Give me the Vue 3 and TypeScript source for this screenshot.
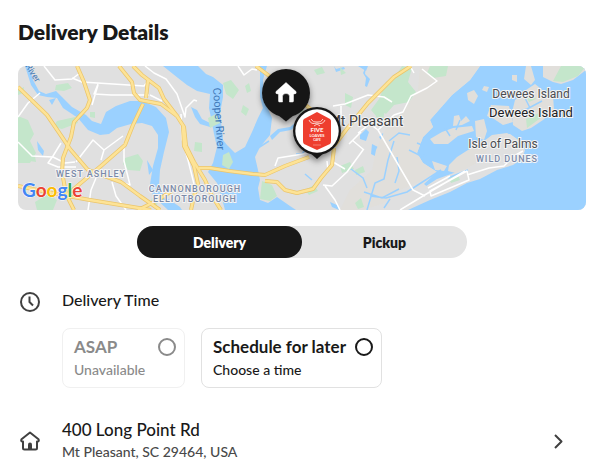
<script setup lang="ts">
import { ref } from 'vue'

type Mode = 'Delivery' | 'Pickup'

interface TimeOption {
  id: string
  title: string
  note: string
  disabled: boolean
}

const modes: Mode[] = ['Delivery', 'Pickup']
const mode = ref<Mode>('Delivery')
const time = ref<string>('')

const options: TimeOption[] = [
  { id: 'asap', title: 'ASAP', note: 'Unavailable', disabled: true },
  { id: 'later', title: 'Schedule for later', note: 'Choose a time', disabled: false },
]

const water: string[] = [
  // Cooper and Wando rivers, harbor
  'M163 66L198 66 206 74 213 77 223 85 223 97 220 113 222 130 223 140 227 145 235 153 245 147 252 132 258 118 263 108 260 97 260 66 267 66 263 80 264 100 272 118 270 135 260 147 255 157 258 170 260 180 258 188 260 200 268 203 277 197 290 206 296 210 225 210 221 195 217 183 208 172 213 163 217 147 214 134 212 123 209 108 210 94 197 91 187 85 178 78Z',
  // Ashley river
  'M25 66L29 66 33 80 39 91 46 94 56 91 62 97 72 107 86 115 92 121 101 124 106 112 116 106 130 101 142 101 156 107 166 118 169 132 164 152 160 170 159 186 164 196 180 207 182 210 168 210 153 196 150 184 153 166 158 148 158 135 152 126 142 123 131 124 117 128 109 134 100 135 88 130 78 118 63 108 57 98 47 97 38 95 31 85Z',
  'M49 100L56 98 52 105ZM37 141L44 151 43 156 38 150Z',
  'M191 107L197 110 202 119 210 123 210 127 200 124 195 117ZM147 160L153 170 149 175Z',
  // sea and back bays
  'M480 66L470 80 452 95 430 120 433 127 423 137 417 153 423 163 437 172 424 184 430 189 423 196 390 210 586 210 586 66Z',
  'M270 136l8-7 12-2 6-5 2 2-7 6-11 2-8 8ZM366 66l-1 8 5 5-3 8-2-1 1-8-3-5ZM334 66l2 3 8-2 1 2-9 3ZM306 148l5-4 4 2-6 4Z',
  'M360 135l6-6 3 3-3 9-6-2ZM372 144l8 4-5 8-4-2ZM349 197l10-3 1 8-6 3ZM330 202l7 3 2 5-7-3ZM358 66l10 0-2 5ZM379 137l4-4 3 5-5 2Z',
]

const marsh: string[] = [
  'M420 66L480 66 470 80 452 95 430 120 433 127 423 137 417 153 423 163 437 172 421 181 400 190 382 204 362 210 340 210 350 190 372 170 376 150 385 130 405 108 418 90Z',
  'M430 139L442 132 453 128 472 126 474 131 458 136 448 144 434 144ZM454 116l5-1 2 6 5-5 4 5-8 4-9 1ZM467 93l7-3 4 6-4 8-6-4ZM475 121l9-2 3 12-3 9-8-3ZM484 86l5 1-2 5-5-2ZM491 105l18 1 4 16-10 3-9-6-7-3Z',
  'M512 112L515 100 526 90 535 84 545 92 553 95 554 110 543 120 531 128 522 131 513 125ZM526 66l5 0 4 14-4 5-7-6ZM512 75l5 0 0 7-5-2Z',
  'M543 66L586 66 586 70 573 80 561 84 553 82 543 77ZM449 165L457 157 468 150 480 144 492 135 507 133 514 137 505 151 490 165 472 172 459 174 448 171ZM432 161l15 5-3 5-9-1Z',
]

const barrierIsland =
  'M370 210L388 202 423 188 437 179 465 169 481 161 487 150 489 139 499 134 510 134 520 141 525 150 522 159 513 165 497 170 480 179 467 183 450 192 430 200 408 210Z'

const parks: string[] = [
  'M18 116l10 4 6 14-4 7 6 12-6 10-12 0ZM56 85l12-2 4 5-8 3-9-1ZM57 121l18-4 3 6-16 6-9-2ZM125 158l13-4 5 7-3 10-12-1-5-6ZM35 202l13-8 9 6-4 10-16 0ZM28 154l7 2 1 6-6-1Z',
  'M223 83l8-3 8 10-6 9-7-5ZM208 118l8-4 4 9-10 5ZM195 142l7 1 0 9-8-1ZM223 155l6-3 4 10-4 7-7-4ZM245 86l4-3 2 8-4 2ZM243 105l6 4-3 7-5-4Z',
  'M262 181l10 4 5 11-7 5-10-2ZM291 108l9-4 4 7-9 4ZM304 136l7 3-2 6-7-3ZM305 190l9-5 4 6-9 4ZM314 70l8-3 3 6-8 2ZM355 170l8-4 2 6-9 3ZM345 93l8 4-2 11-6-3Z',
  'M386 82l9-5 7-11 10 2-4 14 8 10-7 10-15 3-8 9-7-5-3 7-5-6 8-11ZM430 66l18 0-2 10-13 2-6-5ZM340 166l10-4 4 7-12 4ZM377 106l8 3-2 12-7-4ZM355 203l6-5 3 9-6 2ZM340 67l6 6-5 2Z',
  'M561 66L586 66 578 76 563 82 553 81ZM526 119l13-6 3 4-15 11ZM449 178l9-3 2 5-9 3ZM527 98l6-4 3 5-7 3ZM18 90l6-3-1 6-5 2ZM90 112l5 0 0 6-5-1ZM152 198l7 3-3 5-6-3Z',
]

const creeks: string[] = [
  'M367 210l8-27 9-4 4-19 6-19M370 196l16 2 21-6 34-22M364 192l18 6 17-9M384 208l6-9M389 141l10-8 11 2M397 157l2 14-4 12M409 150l10 5 9 1M351 169l12 9 4 10M308 146l-6 8-6 0M255 150l14-9M305 174l7 6M333 131l7 0M417 143l5 2M460 120l-4 10M445 128l5 8M448 178l20-8M505 116l22-7 15-8M523 94l7 14',
]

const minorRoads: string[] = [
  'M44 66l11 14 17-1 8-6M72 78l10 4 62 4 5-6M98 84l-4 10 17 1 38 0M92 105l6-20M18 117l10-14 12-10M18 142l14 14 21 1 12 6 10-1M53 156l8-13M53 156l-5 7 10 4 18 0M76 162l17-22 11 10 19-14M104 150l-3 10M124 143l0 18 6 24-14-4M88 210l3-20 5-12M112 182l4 14 10 14',
  'M145 66l9 7 12 6 11 15 8 23 1-9 8-8 3 1M181 114l1 25 6 21 6 24M238 66l6 9 8-6 5 1M150 95l12 6',
  'M333 106l12-2 23-9 16 2 8 5M341 106l0 16M275 166l3-8 31-5M358 133l12-9 8 6 35 60 12 6M378 130l16-15 9-3 8-16 16-8 10-7-15-12M363 150l-16 22-15 14-9-1M352 140l12 10M333 162l12 7M361 132l-12 12M325 186l10 14 5 10M410 66l4 7M328 170l-1-9',
  'M400 210l23-14 42-25M428 188l22-12M430 191l37-20 2 9-38 16ZM467 175l22-7 15-2 10-10 9-5',
]

const majorRoads: string[] = [
  'M18 87L47 115 62 137 70 149 88 170 121 182 140 196 160 210',
  'M77 66L84 82 90 100 87 108 74 122 71 137 63 158 62 172 66 194 74 210',
  'M119 66L132 82 134 93 140 100 161 104 177 116 184 127 186 146 194 162 205 180 212 196 221 210',
  'M133 66L142 75 159 88 164 99 177 116M148 80l-2 18M143 104l-10 21-8 20-24 21-38 32',
  'M18 186L62 195 90 200 151 210',
  'M183 126l1 20 10 20 4 18-4 12-3 14M199 168l11 0 19 3 24 3 12 1 20-9 24-9',
  'M265 181l12 1 8 8 12 3 16-4 8-11 11-13 2-17M138 210l20-10 18-12 18-1',
  'M256 66l12 9 40 32 16 15M334 146l12-16 22-27 26-26 17-11',
]
</script>

<template>
  <main class="page">
    <h1>Delivery Details</h1>

    <svg class="map" viewBox="18 66 568 144" preserveAspectRatio="xMidYMid slice" role="img" aria-label="Map">
      <defs>
        <filter id="pin-shadow" x="-50%" y="-50%" width="200%" height="200%">
          <feDropShadow dx="0" dy="3" stdDeviation="3" flood-color="#000" flood-opacity="0.45" />
        </filter>
      </defs>
      <rect x="18" y="66" width="568" height="144" class="land" />
      <path v-for="d in water" :key="d" :d="d" class="water" />
      <path v-for="d in marsh" :key="d" :d="d" class="marsh" />
      <path :d="barrierIsland" class="land" />
      <path v-for="d in parks" :key="d" :d="d" class="park" />
      <path v-for="d in creeks" :key="d" :d="d" class="creek" />
      <path v-for="d in minorRoads" :key="d" :d="d" class="minor" />
      <path v-for="d in majorRoads" :key="'c' + d" :d="d" class="casing" />
      <path v-for="d in majorRoads" :key="d" :d="d" class="major" />

      <g class="river">
        <text transform="translate(213 88) rotate(86)">Cooper River</text>
        <text transform="translate(25 66) rotate(58)" class="small">River</text>
      </g>
      <g class="district">
        <text x="91" y="177">WEST ASHLEY</text>
        <text x="195" y="192">CANNONBOROUGH</text>
        <text x="195" y="202">ELLIOTBOROUGH</text>
        <text x="507" y="162">WILD DUNES</text>
      </g>
      <g class="place">
        <text x="531" y="98">Dewees Island</text>
        <text x="531" y="117" class="strong">Dewees Island</text>
        <text x="503" y="148">Isle of Palms</text>
        <text x="366" y="126" class="town">Mt Pleasant</text>
      </g>
      <text x="22" y="197" class="google"><tspan fill="#4285f4">G</tspan><tspan fill="#ea4335">o</tspan><tspan fill="#fbbc05">o</tspan><tspan fill="#4285f4">g</tspan><tspan fill="#34a853">l</tspan><tspan fill="#ea4335">e</tspan></text>

      <g filter="url(#pin-shadow)">
        <path d="M278 115L286 121.500 294 115Z" fill="#191919" />
        <circle cx="286" cy="93" r="24" fill="#191919" />
      </g>
      <path
        d="M286 82.500L296 91.500Q297 94 294 94H293.500V101Q293.500 102 292.500 102H289.500V96.500Q289.500 93.500 286 93.500T282.500 96.500V102H279.500Q278.500 102 278.500 101V94H278Q275 94 276 91.500Z"
        fill="#fff" stroke="#fff" stroke-width="0.500" stroke-linejoin="round"
      />
      <g filter="url(#pin-shadow)">
        <path d="M309 152L317 159 325 152Z" fill="#191919" />
        <circle cx="317" cy="131" r="24" fill="#191919" />
      </g>
      <circle cx="317" cy="131" r="21.700" fill="#fff" />
      <path d="M317 112L330 119Q331 120 331 121V141Q331 143 330 144L317 150 304 144Q303 143 303 141V121Q303 120 304 119Z" fill="#ee3e2f" />
      <path d="M309 120q2 5 8 3 6 2 8-3M311 119q2 4 6 3 4 1 6-3M314 126l3-2 3 2" fill="none" stroke="#fbd0ca" stroke-width="1" />
      <g class="brand">
        <text x="317" y="132" font-size="6">FIVE</text>
        <text x="317" y="137" font-size="4">LOAVES</text>
        <text x="317" y="141" font-size="3">CAFE</text>
      </g>
      <path d="M313 145h8" stroke="#f79c92" stroke-width="0.700" />
    </svg>

    <div class="switch" role="group" aria-label="Order type">
      <button
        v-for="m in modes"
        :key="m"
        type="button"
        :class="{ active: mode === m }"
        :aria-pressed="mode === m"
        @click="mode = m"
      >{{ m }}</button>
    </div>

    <section class="row time">
      <svg class="icon" viewBox="0 0 24 24" aria-hidden="true">
        <circle cx="12" cy="12" r="9" />
        <path d="M11.500 6.500V12L15 15.500" />
      </svg>
      <div class="body">
        <h2>Delivery Time</h2>
        <div class="cards">
          <label v-for="o in options" :key="o.id" class="card" :class="{ disabled: o.disabled }">
            <span class="card-head">
              <span class="card-title">{{ o.title }}</span>
              <input v-model="time" type="radio" name="time" :value="o.id" :disabled="o.disabled" />
            </span>
            <span class="card-note">{{ o.note }}</span>
          </label>
        </div>
      </div>
    </section>

    <a class="row address" href="#address">
      <svg class="icon" viewBox="0 0 24 24" aria-hidden="true">
        <path d="M12 3.500L20.500 10.200Q21.500 12.500 19.500 12.500H19V19Q19 20.500 17.500 20.500H6.500Q5 20.500 5 19V12.500H4.500Q2.500 12.500 3.500 10.200Z" />
        <path d="M10 20V15.500Q10 13.500 12 13.500T14 15.500V20Z" class="solid" />
      </svg>
      <span class="body">
        <span class="street">400 Long Point Rd</span>
        <span class="city">Mt Pleasant, SC 29464, USA</span>
      </span>
      <svg class="icon" viewBox="0 0 24 24" aria-hidden="true">
        <path d="M9 6L15.500 12.500 9 19" />
      </svg>
    </a>
  </main>
</template>

<style>
body {
  margin: 0;
  background: #fff;
}
</style>

<style scoped>
.page {
  box-sizing: border-box;
  padding: 16px 6px 0 18px;
  color: #191919;
  font-family: Lato, 'Open Sans', sans-serif;
}
h1 {
  margin: 0 0 18px;
  font-size: 21px;
  line-height: 32px;
  font-weight: 800;
}
.map {
  display: block;
  width: 100%;
  height: 144px;
  border-radius: 8px;
}
.land { fill: #e0e0e0; }
.water { fill: #9bd1ff; }
.marsh { fill: #e1dfdb; }
.park { fill: #c4e6cb; }
.creek { fill: none; stroke: #9bd1ff; stroke-width: 1.5; }
.minor { fill: none; stroke: #fff; stroke-width: 1.5; stroke-linejoin: round; }
.casing { fill: none; stroke: #ebc56b; stroke-width: 4; stroke-linejoin: round; }
.major { fill: none; stroke: #fde396; stroke-width: 2.5; stroke-linejoin: round; }
.river {
  font: 11px Roboto, sans-serif;
  fill: #3f78b8;
}
.river .small { font-size: 9px; }
.district {
  font: 500 9px Roboto, sans-serif;
  letter-spacing: 1px;
  text-anchor: middle;
  fill: #7b8aa8;
  stroke: #f4f4f4;
  stroke-width: 2px;
  paint-order: stroke;
}
.place {
  font: 12px Roboto, sans-serif;
  text-anchor: middle;
  fill: #4a4d52;
  stroke: #f4f4f4;
  stroke-width: 2px;
  paint-order: stroke;
}
.place .strong { font-size: 13px; fill: #202124; }
.place .town { font-size: 14px; fill: #3c4043; }
.google {
  font: 700 19px Lato, sans-serif;
  stroke: #fff;
  stroke-width: 1px;
  paint-order: stroke;
}
.brand {
  font-family: Lato, sans-serif;
  font-weight: 800;
  text-anchor: middle;
  fill: #ffe9e4;
}
.switch {
  display: grid;
  grid-template-columns: 1fr 1fr;
  max-width: 330px;
  margin: 16px auto 0;
  border-radius: 16px;
  background: #e4e4e4;
}
.switch button {
  height: 32px;
  padding: 0;
  border: 0;
  border-radius: 16px;
  background: none;
  color: #191919;
  font: 800 14px Lato, 'Open Sans', sans-serif;
}
.switch button.active {
  background: #191919;
  color: #fff;
}
.row {
  display: flex;
  gap: 20px;
}
.time { margin-top: 32px; }
.body { flex: 1; }
.icon {
  flex: none;
  width: 24px;
  height: 24px;
  fill: none;
  stroke: #404040;
  stroke-width: 2;
  stroke-linejoin: round;
}
.icon .solid { fill: #404040; stroke: none; }
h2 {
  margin: 0 0 18px;
  font-size: 16px;
  line-height: 20px;
  font-weight: 500;
}
.cards {
  display: flex;
  flex-wrap: wrap;
  gap: 16px;
}
.card {
  box-sizing: border-box;
  min-width: 123px;
  padding: 6px 8px 6px 11px;
  border: 1px solid #e1e1e1;
  border-radius: 8px;
}
.card-head {
  display: flex;
  align-items: center;
  justify-content: space-between;
  gap: 9px;
}
.card-title {
  font-size: 17px;
  line-height: 24px;
  font-weight: 700;
}
.card input {
  appearance: none;
  width: 18px;
  height: 18px;
  margin: 0;
  border: 2px solid #191919;
  border-radius: 50%;
}
.card input:checked { border-width: 6px; }
.card-note {
  display: block;
  font-size: 14px;
  line-height: 22px;
  font-weight: 500;
}
.disabled {
  border-color: #f0f0f0;
  color: #8a8a8a;
}
.card.disabled input { border-color: #8a8a8a; }
.address {
  align-items: center;
  margin-top: 31px;
  padding-right: 16px;
  color: inherit;
  text-decoration: none;
}
.street,
.city { display: block; line-height: 22px; }
.street {
  font-size: 17px;
  font-weight: 500;
}
.city {
  color: #494949;
  font-size: 14px;
  font-weight: 500;
}
</style>
